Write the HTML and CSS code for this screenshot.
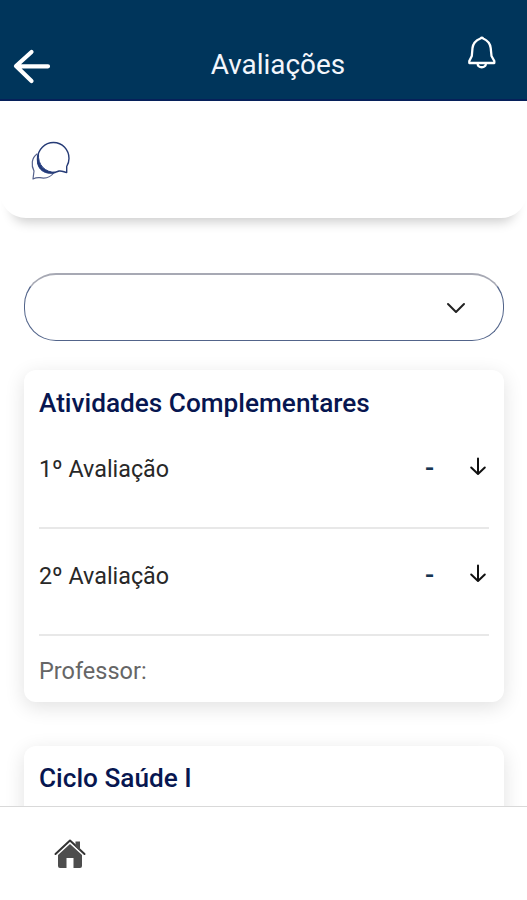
FILE: index.html
```html
<!DOCTYPE html>
<html lang="pt-BR">
<head>
<meta charset="utf-8">
<title>Avaliações</title>
<link rel="stylesheet" href="styles.css">
</head>
<body>
<div class="app">
  <header class="header">
    <svg class="back" viewBox="0 0 40 40"><path d="M20.500 6 5 20l15.500 15M6 20.300H37"/></svg>
    <h1 class="title">Avaliações</h1>
    <svg class="bell" viewBox="0 0 32 38"><path d="M14.500 4.500C9.500 6.500 7 9.500 6.500 14L5.800 22l-2.500 5v2h25v-2l-2.800-5-.8-8c-.5-4.500-3-7.500-7.500-9.500-.8-1-1.800-1-2.700 0ZM11.500 29.500c.5 5 8 5 8.500 0"/></svg>
  </header>
  <section class="chat-bar">
    <svg class="chat" viewBox="0 0 42 42">
      <path class="chat-thin" d="M7 14C1.500 18 1 25 4 31l-1 8c3-1.500 4.500-1.700 7-1.300 5 1 10.500-.2 14-5.200"/>
      <path class="chat-fill" d="M8.500 14C4 27 13 36 26 32.500 15 32.500 7.500 25 8.500 14Z"/>
      <path class="chat-line" d="M29 31C18 36 7.500 28.500 7.500 19 7.500 9.500 15 2.500 23.500 2.500c9 0 15.500 7.500 15.500 16 0 3-.8 5.500-2.300 8v6c-2.500-.2-4.200-2-7.700-1.500Z"/>
    </svg>
  </section>
  <main class="content">
    <div class="select">
      <svg class="chevron" viewBox="0 0 20 12"><path d="m2 2 8 8 8-8"/></svg>
    </div>
    <article class="card">
      <h2 class="subject">Atividades Complementares</h2>
      <div class="row">
        <span class="label">1º Avaliação</span><span class="grade">-</span>
        <svg class="down" viewBox="0 0 18 20"><path d="M9 1.500v15M2.200 10.500l6.800 6.500 6.800-6.500"/></svg>
      </div>
      <div class="row">
        <span class="label">2º Avaliação</span><span class="grade">-</span>
        <svg class="down" viewBox="0 0 18 20"><path d="M9 1.500v15M2.200 10.500l6.800 6.500 6.800-6.500"/></svg>
      </div>
      <p class="teacher">Professor:</p>
    </article>
    <article class="card">
      <h2 class="subject">Ciclo Saúde I</h2>
    </article>
  </main>
  <nav class="tabbar">
    <svg class="home" viewBox="0 0 32 32"><path class="home-roof" d="M1.500 16 16 2.500 30.500 16"/><path class="home-body" d="M21.500 3.500h4.500v9l-4.500-4ZM4 17 16 6l12 11v11q0 2-2 2h-6.500V20h-7v10H6q-2 0-2-2Z"/></svg>
  </nav>
</div>
</body>
</html>
```
FILE: styles.css
```css
* { box-sizing: border-box; }
body { margin: 0; font-family: Roboto, "Liberation Sans", sans-serif; background: #fff; }
h1, h2, p { margin: 0; }
svg { display: block; fill: none; flex: none; stroke-linecap: round; stroke-linejoin: round; }

.app { height: 900px; display: flex; flex-direction: column; overflow: hidden; }

.header {
  height: 101px;
  flex: none;
  display: grid;
  grid-template-columns: 60px 1fr 61px;
  padding-left: 11px;
  background: #00355b;
  border-bottom: 2px solid #06205a;
}
.back { width: 40px; height: 40px; margin-top: 46px; stroke: #fff; stroke-width: 4.2; }
.title {
  margin-top: 47px;
  padding-left: 19px;
  text-align: center;
  font-size: 27.900px;
  line-height: 36px;
  font-weight: 400;
  color: #f3f6fc;
}
.bell { width: 32px; height: 38px; margin-top: 34px; stroke: #fff; stroke-width: 2.3; }

.chat-bar {
  height: 117px;
  flex: none;
  padding: 39px 0 0 30px;
  border-radius: 0 0 26px 26px;
  box-shadow: 0 16px 12px -12px rgba(0, 0, 0, .2);
}
.chat { width: 42px; height: 42px; }
.chat-line { stroke: #263b76; stroke-width: 1.4; }
.chat-thin { stroke: #55618c; stroke-width: 1.2; }
.chat-fill { fill: #233c80; stroke: #233c80; }

.content { flex: 1; min-height: 0; overflow: hidden; padding: 55px 23px 0 24px; }
.select {
  height: 68px;
  display: flex;
  align-items: center;
  justify-content: flex-end;
  padding-right: 37px;
  border: 1.500px solid #52648a;
  border-top: 2px solid #a7a9b4;
  border-radius: 32px;
}
.chevron { width: 20px; height: 12px; stroke: #222; stroke-width: 2; }

.card {
  margin-top: 29px;
  height: 332px;
  padding: 15px 15px 0;
  border-radius: 12px;
  background: #fff;
  box-shadow: 0 5px 20px rgba(0, 0, 0, .12);
}
.card + .card { margin-top: 44px; padding-top: 14px; }
.subject {
  height: 37px;
  font-size: 26.200px;
  line-height: 37px;
  font-weight: 500;
  color: #071650;
  white-space: nowrap;
}
.row {
  height: 107px;
  display: flex;
  align-items: flex-start;
  padding-top: 31px;
  border-bottom: 2px solid #e8e8e8;
}
.label { flex: 1; font-size: 23.300px; line-height: 32px; color: #282828; }
.grade { width: 10px; margin-right: 34px; font-size: 27px; line-height: 31px; font-weight: 500; color: #173552; }
.down { width: 18px; height: 20px; margin: 4px 2px 0 0; stroke: #111; stroke-width: 2; }
.teacher { margin-top: 19px; font-size: 23.500px; line-height: 32px; color: #666; }

.tabbar { height: 94px; flex: none; padding: 31px 0 0 54px; border-top: 1px solid #d9d9d9; background: #fff; }
.home { width: 32px; height: 32px; }
.home-roof { stroke: #333; stroke-width: 2; }
.home-body { fill: #4d4d4d; }
```
